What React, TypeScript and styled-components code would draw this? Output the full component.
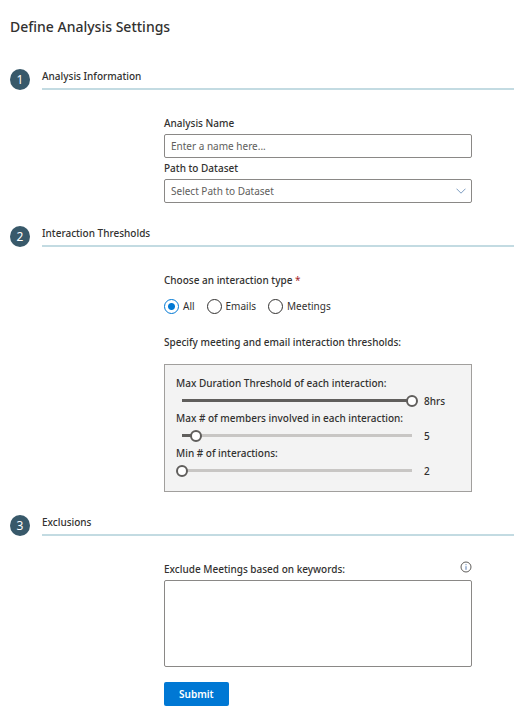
import React, { useState } from "react";
import styled, { createGlobalStyle } from "styled-components";

const GlobalStyle = createGlobalStyle`
  *, *::before, *::after { box-sizing: border-box; }
  body {
    margin: 0;
    background: #fff;
    color: #323130;
    font: 500 10px/20px "Noto Sans", "Open Sans", sans-serif;
  }
  input, select, textarea, button { font: inherit; color: inherit; margin: 0; }
`;

const Page = styled.main`
  padding: 16px 0 12px 10px;
`;

const Title = styled.h1`
  margin: 0 0 31px;
  font-size: 14px;
  line-height: 22px;
  font-weight: 500;
`;

const Section = styled.section`
  margin-bottom: 23px;

  &:last-child { margin-bottom: 0; }
`;

const SectionHeader = styled.header`
  display: flex;
  gap: 12px;
`;

const StepNumber = styled.span`
  flex: none;
  width: 20px;
  height: 21px;
  border-radius: 50%;
  background: #38596a;
  color: #fff;
  font-size: 12px;
  font-weight: 400;
  line-height: 21px;
  text-align: center;
`;

const SectionTitle = styled.h2`
  flex: 1;
  margin: 0;
  border-bottom: 2px solid #c3dbe2;
  font-size: 10px;
  font-weight: 500;
  line-height: 15px;
`;

const SectionBody = styled.div`
  display: flex;
  flex-direction: column;
  margin: 23px 42px 0 154px;
`;

const FieldLabel = styled.label`
  line-height: 21px;
`;

const TextInput = styled.input`
  width: 100%;
  height: 24px;
  padding: 0 6px;
  border: 1px solid #8a8886;
  border-radius: 2px;
  background: #fff;
  font-weight: 400;
  &::placeholder { color: #605e5c; opacity: 1; }
`;

const SelectBox = styled.div`
  position: relative;
  display: flex;
`;

const Select = styled.select`
  appearance: none;
  width: 100%;
  height: 24px;
  padding: 0 24px 0 6px;
  border: 1px solid #8a8886;
  border-radius: 2px;
  background: #fff;
  color: #605e5c;
  font-weight: 400;
`;

const Chevron = styled.svg`
  position: absolute;
  top: 9px;
  right: 6px;
  pointer-events: none;
`;

const RadioGroup = styled.fieldset`
  margin: 0;
  padding: 0;
  border: 0;
  min-width: 0;
`;

const GroupLegend = styled.legend`
  padding: 0;
  margin-bottom: 6px;
  line-height: 20px;
`;

const Required = styled.span`
  color: #a4262c;
  font-weight: 400;
`;

const RadioRow = styled.div`
  display: flex;
  gap: 12px;
`;

const RadioLabel = styled.label`
  display: flex;
  align-items: center;
  gap: 4px;
  font-weight: 400;
`;

const Radio = styled.input`
  appearance: none;
  flex: none;
  width: 15px;
  height: 15px;
  border: 1px solid #323130;
  border-radius: 50%;
  background: #fff;
  &:checked {
    border-color: #0078d4;
    background: radial-gradient(circle, #0078d4 3px, #fff 4px);
  }
`;

const Hint = styled.p`
  margin: 16px 0 12px;
`;

const Panel = styled.div`
  padding: 10px 11px 11px;
  border: 1px solid #a19f9d;
  background: #f3f3f3;
`;

const SliderLabel = styled.label`
  display: block;
  padding-top: 1px;
  line-height: 15px;
`;

const SliderRow = styled.div`
  display: flex;
  align-items: center;
  gap: 6px;
  height: 19px;
`;

const Slider = styled.input`
  appearance: none;
  flex: 1;
  min-width: 0;
  height: 12px;
  background:
    linear-gradient(#605e5c, #605e5c) 6px 50% / calc((100% - 12px) * var(--filled)) 3px no-repeat,
    linear-gradient(#c8c6c4, #c8c6c4) 6px 50% / calc(100% - 12px) 3px no-repeat;
  &::-webkit-slider-thumb {
    appearance: none;
    width: 12px;
    height: 12px;
    border: 2px solid #605e5c;
    border-radius: 50%;
    background: #fff;
  }
`;

const SliderValue = styled.output`
  width: 36px;
  padding-top: 1px;
`;

const LabelRow = styled.div`
  display: flex;
  align-items: flex-start;
  justify-content: space-between;
`;

const InfoButton = styled.button`
  display: flex;
  padding: 2px 0 0;
  border: 0;
  background: none;
  color: #605e5c;
`;

const KeywordsArea = styled.textarea`
  display: block;
  width: 100%;
  height: 87px;
  padding: 4px 6px;
  border: 1px solid #8a8886;
  border-radius: 2px;
  resize: none;
  font-weight: 400;
`;

const SubmitButton = styled.button`
  align-self: flex-start;
  height: 24px;
  margin-top: 15px;
  padding: 0 15px;
  border: 0;
  border-radius: 2px;
  background: #0078d4;
  color: #fff;
  font-weight: 600;
`;

type ThresholdProps = {
  id: string;
  label: string;
  min: number;
  max: number;
  initial: number;
  unit?: string;
};

function Threshold({ id, label, min, max, initial, unit = "" }: ThresholdProps) {
  const [value, setValue] = useState(initial);
  const filled = (value - min) / (max - min);
  return (
    <div>
      <SliderLabel htmlFor={id}>{label}</SliderLabel>
      <SliderRow>
        <Slider
          id={id}
          type="range"
          min={min}
          max={max}
          value={value}
          onChange={(e) => setValue(Number(e.target.value))}
          style={{ "--filled": filled } as React.CSSProperties}
        />
        <SliderValue htmlFor={id}>{value}{unit}</SliderValue>
      </SliderRow>
    </div>
  );
}

type StepProps = { step: number; title: string; children: React.ReactNode };

function Step({ step, title, children }: StepProps) {
  return (
    <Section>
      <SectionHeader>
        <StepNumber>{step}</StepNumber>
        <SectionTitle>{title}</SectionTitle>
      </SectionHeader>
      <SectionBody>{children}</SectionBody>
    </Section>
  );
}

const interactionTypes = ["All", "Emails", "Meetings"];

export default function App() {
  const [interaction, setInteraction] = useState("All");
  return (
    <>
      <GlobalStyle />
      <Page>
        <Title>Define Analysis Settings</Title>

        <Step step={1} title="Analysis Information">
          <FieldLabel htmlFor="analysis-name">Analysis Name</FieldLabel>
          <TextInput id="analysis-name" type="text" placeholder="Enter a name here..." />
          <FieldLabel htmlFor="dataset">Path to Dataset</FieldLabel>
          <SelectBox>
            <Select id="dataset" defaultValue="">
              <option value="">Select Path to Dataset</option>
            </Select>
            <Chevron width="10" height="6" viewBox="0 0 10 6" fill="none" stroke="#7c9cc0" aria-hidden="true">
              <path d="M0.5 0.7 L5 5.2 L9.5 0.7" />
            </Chevron>
          </SelectBox>
        </Step>

        <Step step={2} title="Interaction Thresholds">
          <RadioGroup>
            <GroupLegend>
              Choose an interaction type <Required>*</Required>
            </GroupLegend>
            <RadioRow>
              {interactionTypes.map((type) => (
                <RadioLabel key={type}>
                  <Radio
                    type="radio"
                    name="interaction"
                    checked={interaction === type}
                    onChange={() => setInteraction(type)}
                  />
                  {type}
                </RadioLabel>
              ))}
            </RadioRow>
          </RadioGroup>
          <Hint>Specify meeting and email interaction thresholds:</Hint>
          <Panel>
            <Threshold id="duration" label="Max Duration Threshold of each interaction:" min={1} max={8} initial={8} unit="hrs" />
            <Threshold id="members" label="Max # of members involved in each interaction:" min={2} max={50} initial={5} />
            <Threshold id="interactions" label="Min # of interactions:" min={2} max={50} initial={2} />
          </Panel>
        </Step>

        <Step step={3} title="Exclusions">
          <LabelRow>
            <FieldLabel htmlFor="keywords">Exclude Meetings based on keywords:</FieldLabel>
            <InfoButton type="button" aria-label="More information">
              <svg width="12" height="12" viewBox="0 0 12 12" fill="none" stroke="currentColor" aria-hidden="true">
                <circle cx="6" cy="6" r="5" />
                <path d="M6 5.2 V8.8 M6 3.2 V4.2" stroke="#5b7fb5" />
              </svg>
            </InfoButton>
          </LabelRow>
          <KeywordsArea id="keywords" />
          <SubmitButton type="submit">Submit</SubmitButton>
        </Step>
      </Page>
    </>
  );
}
